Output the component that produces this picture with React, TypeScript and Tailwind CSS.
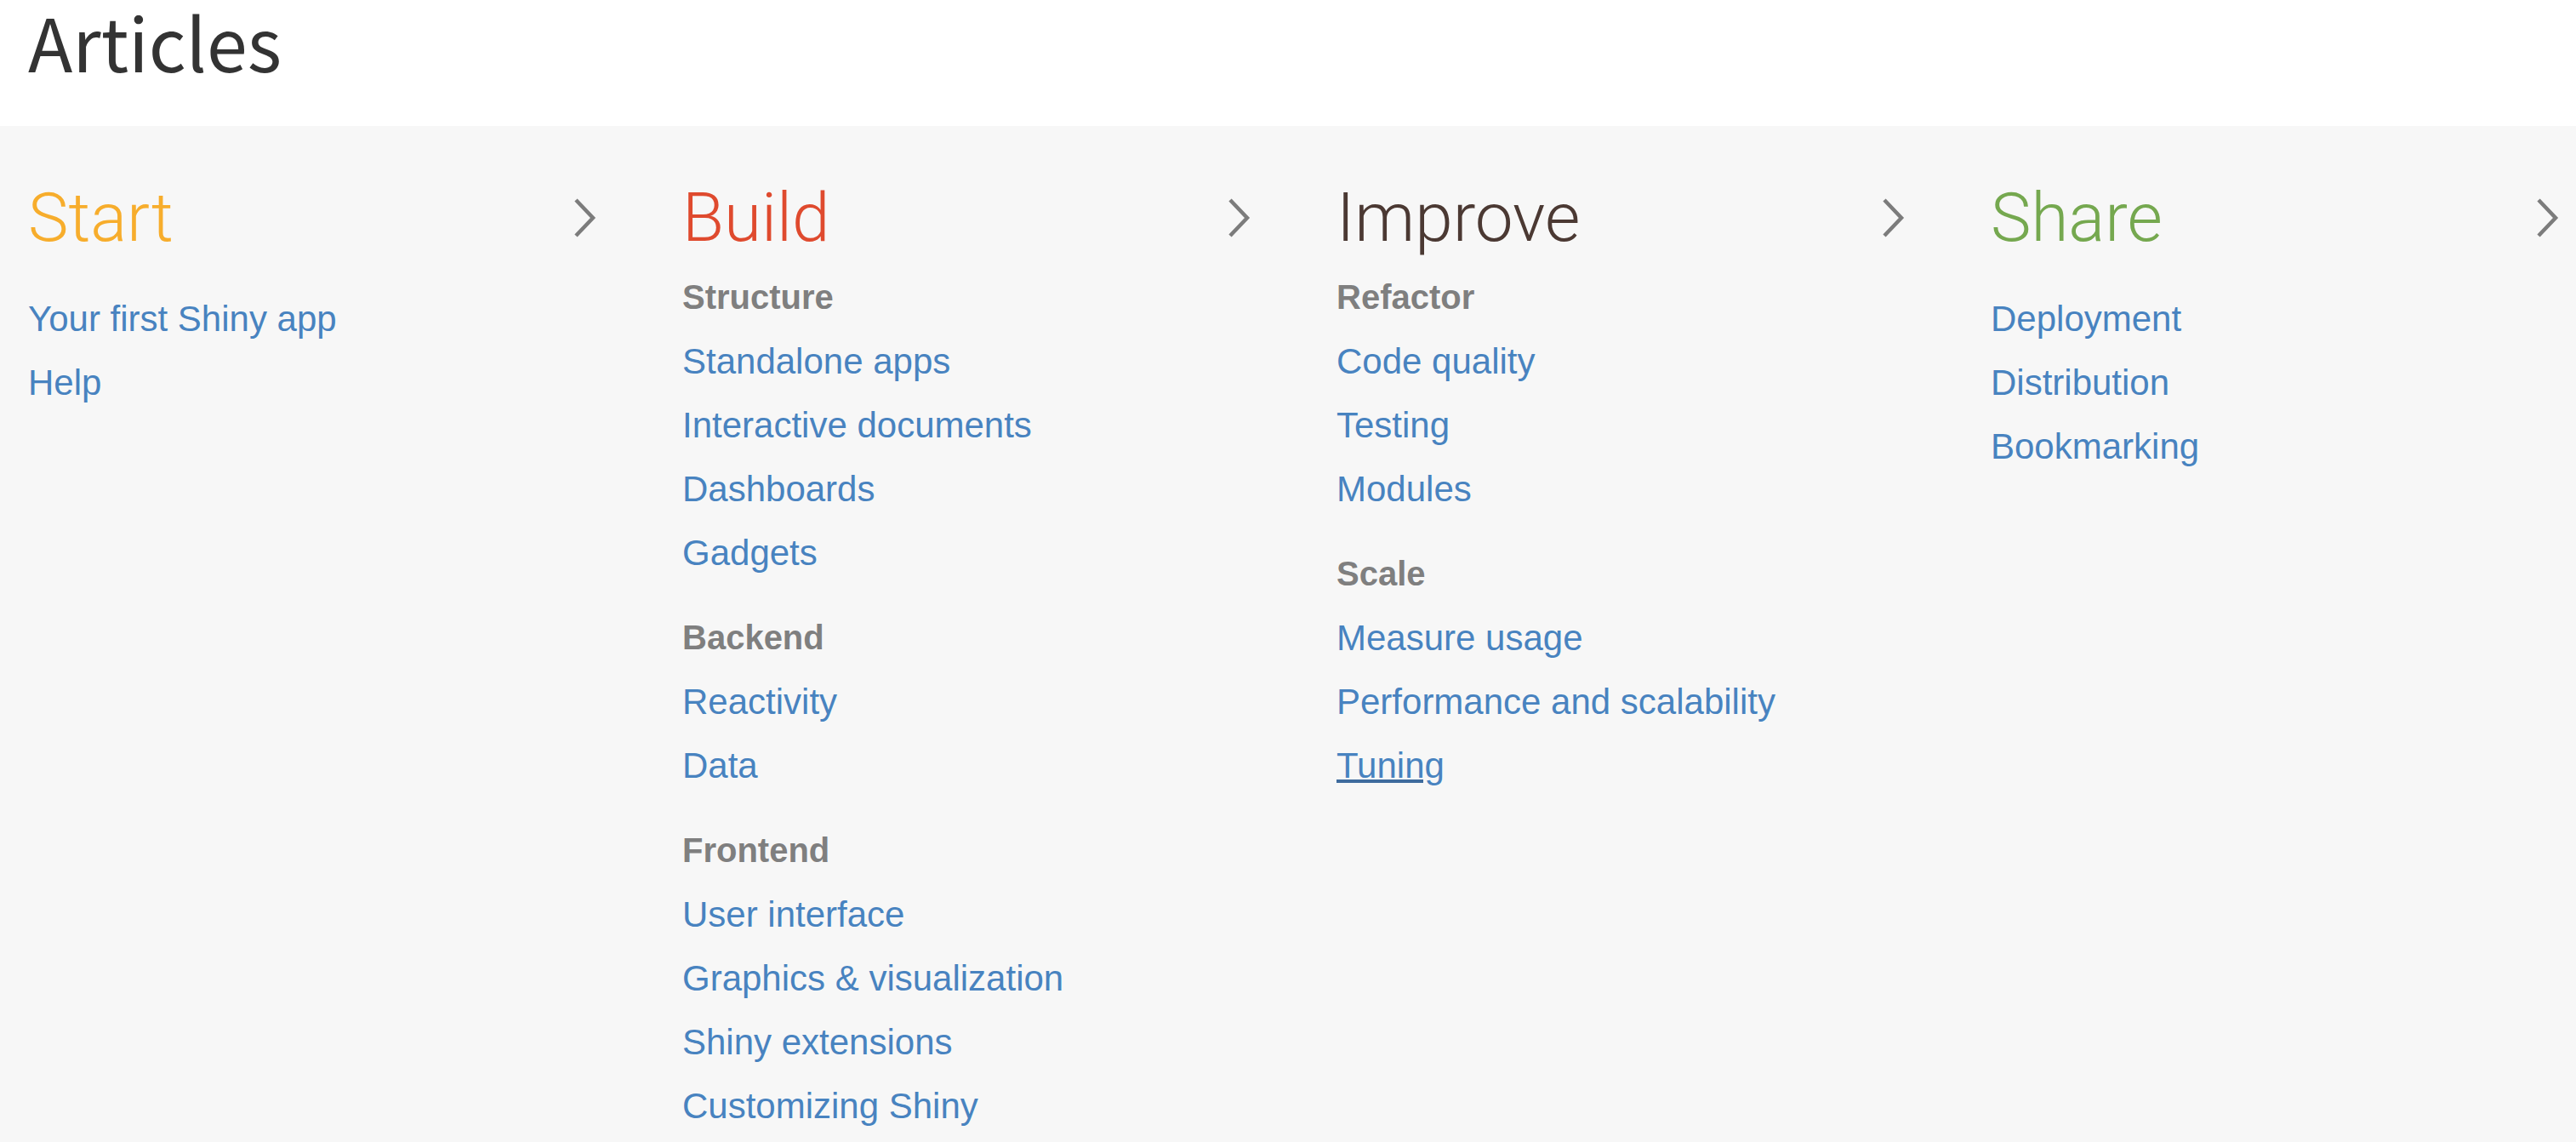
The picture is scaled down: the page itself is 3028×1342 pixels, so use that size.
import React from 'react';

type Group = { header?: string; links: string[] };
type Section = { title: string; color: string; groups: Group[] };

const sections: Section[] = [
  {
    title: 'Start',
    color: 'text-[#f7ad2c]',
    groups: [{ links: ['Your first Shiny app', 'Help'] }],
  },
  {
    title: 'Build',
    color: 'text-[#df4a2e]',
    groups: [
      { header: 'Structure', links: ['Standalone apps', 'Interactive documents', 'Dashboards', 'Gadgets'] },
      { header: 'Backend', links: ['Reactivity', 'Data'] },
      {
        header: 'Frontend',
        links: ['User interface', 'Graphics & visualization', 'Shiny extensions', 'Customizing Shiny'],
      },
    ],
  },
  {
    title: 'Improve',
    color: 'text-[#4b3933]',
    groups: [
      { header: 'Refactor', links: ['Code quality', 'Testing', 'Modules'] },
      { header: 'Scale', links: ['Measure usage', 'Performance and scalability', 'Tuning'] },
    ],
  },
  {
    title: 'Share',
    color: 'text-[#75a84f]',
    groups: [{ links: ['Deployment', 'Distribution', 'Bookmarking'] }],
  },
];

function Chevron() {
  return (
    <svg width="28" height="48" viewBox="0 0 28 48" fill="none" className="shrink-0">
      <polyline points="4,3 24,24 4,45" stroke="#7c7c7c" strokeWidth="4.5" strokeLinecap="butt" />
    </svg>
  );
}

function SectionColumn({ section }: { section: Section }) {
  const hasHeaders = section.groups.some((g) => g.header);
  return (
    <div className="flex flex-col">
      <div className="flex h-[80px] items-center justify-between mb-[16px]">
        <h2
          className={`${section.color} text-[80px] leading-[80px] font-light`}
          style={{ fontFamily: 'Roboto, "Liberation Sans", sans-serif' }}
        >
          {section.title}
        </h2>
        <Chevron />
      </div>
      <div className={hasHeaders ? '' : 'pt-[25px]'}>
        {section.groups.map((group, gi) => (
          <div key={gi} className={gi > 0 ? 'mt-[25px]' : ''}>
            {group.header && (
              <div className="h-[75px] leading-[75px] text-[40px] font-bold text-[#7f7f7f]">
                {group.header}
              </div>
            )}
            <ul>
              {group.links.map((link) => (
                <li key={link} className="h-[75px] leading-[75px] text-[42px]">
                  <a
                    href="#"
                    className={
                      link === 'Tuning'
                        ? 'text-[#4883c0] underline decoration-[#3e6b9d] decoration-[4px] underline-offset-[2px]'
                        : 'text-[#4883c0]'
                    }
                  >
                    {link}
                  </a>
                </li>
              ))}
            </ul>
          </div>
        ))}
      </div>
    </div>
  );
}

export default function App() {
  return (
    <div
      className="min-h-screen bg-[#f7f7f7]"
      style={{ fontFamily: '"Liberation Sans", Arial, sans-serif' }}
    >
      <header className="h-[148px] bg-white pl-[33px] pt-[5px]">
        <h1
          className="text-[86px] leading-[86px] text-[#333333]"
          style={{ fontFamily: '"Noto Sans CJK SC", "Noto Sans", sans-serif' }}
        >
          Articles
        </h1>
      </header>

      <main className="pl-[33px] pt-[68px] pb-[20px]">
        <div className="grid grid-cols-[repeat(4,668px)] gap-x-[101px]">
          {sections.map((s) => (
            <SectionColumn key={s.title} section={s} />
          ))}
        </div>
      </main>
    </div>
  );
}
